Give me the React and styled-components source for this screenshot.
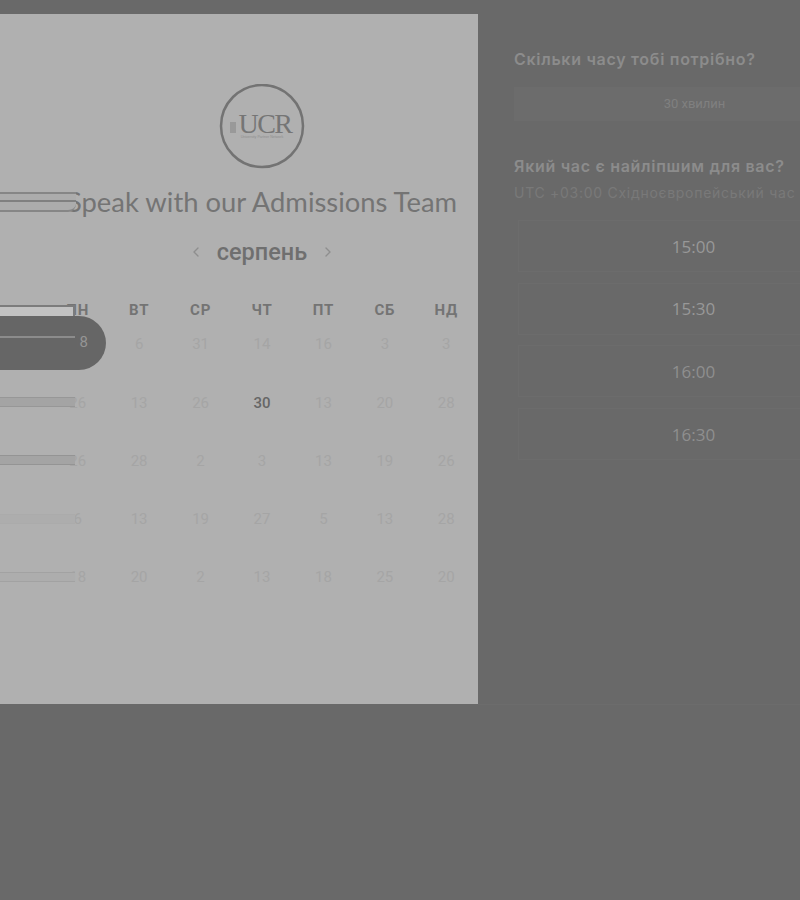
import React from 'react';
import styled, { createGlobalStyle } from 'styled-components';
import { FiChevronLeft, FiChevronRight } from 'react-icons/fi';

const GlobalStyle = createGlobalStyle`
  html, body {
    margin: 0;
    padding: 0;
    background: #696969;
    font-family: "Liberation Sans", Arial, sans-serif;
  }
`;

const Page = styled.div`
  width: 800px;
  height: 900px;
  overflow: hidden;
  padding-top: 14px;
  box-sizing: border-box;
  display: flex;
  align-items: flex-start;
`;

const LeftPanel = styled.section`
  position: relative;
  flex: 0 0 478px;
  height: 690px;
  box-sizing: border-box;
  padding: 70px 0 0 46px;
  background: #b0b0b0;
  overflow: hidden;
  display: flex;
  flex-direction: column;
  align-items: center;
`;

const Logo = styled.svg`
  width: 86px;
  height: 86px;
  display: block;
`;

const Heading = styled.h1`
  margin: 16px 0 0;
  font-family: Lato, "Open Sans", sans-serif;
  font-size: 27.4px;
  line-height: 32px;
  font-weight: 400;
  color: #747474;
  white-space: nowrap;
  width: 432px;
  text-align: center;
`;

const MonthRow = styled.div`
  display: flex;
  align-items: center;
  gap: 13px;
  margin-top: 21px;
  color: #8e8e8e;
  font-size: 16px;
`;

const MonthName = styled.span`
  font-family: Roboto, sans-serif;
  font-size: 23.5px;
  line-height: 26px;
  color: #6f6f6f;
  font-weight: 500;
`;

const Grid = styled.div`
  margin-top: 33px;
  width: 430px;
  display: grid;
  grid-template-columns: repeat(7, 1fr);
  grid-auto-rows: 58.3px;
  justify-items: center;
`;

const DayHead = styled.div`
  height: 30px;
  font-family: Roboto, sans-serif;
  font-size: 15px;
  line-height: 24px;
  font-weight: 700;
  letter-spacing: 0.8px;
  color: #747474;
`;

const Day = styled.div`
  font-family: Roboto, sans-serif;
  font-size: 15px;
  line-height: 24px;
  margin-top: -24px;
  color: ${({ $active }) => ($active ? '#666666' : '#a5a5a5')};
  font-weight: ${({ $active }) => ($active ? 500 : 400)};
`;

/* stray rendering remnants lying over the left edge of the panel */
const HeadingLines = styled.div`
  position: absolute;
  left: 0;
  top: 178px;
  width: 76px;
  height: 20px;
  box-sizing: border-box;
  background: #acacac;
  border: solid #868686;
  border-width: 2px 0;
  border-radius: 0 0 8px 0;
  &::after {
    content: '';
    display: block;
    margin-top: 6px;
    height: 2px;
    background: #808080;
  }
`;

const HeadBar = styled.div`
  position: absolute;
  left: 0;
  top: 291px;
  width: 75px;
  height: 11px;
  box-sizing: border-box;
  background: #c2c2c2;
  border: solid #7c7c7c;
  border-width: 2px 2px 0 0;
`;

const Pill = styled.div`
  position: absolute;
  left: 0;
  top: 302px;
  width: 106px;
  height: 54px;
  border-radius: 0 27px 27px 0;
  background: #666666;
  display: flex;
  align-items: center;
  &::before {
    content: '';
    position: relative;
    z-index: 1;
    flex: 0 0 77px;
    height: 54px;
    background: linear-gradient(#8c8c8c, #8c8c8c) 0 20px / 75px 2px no-repeat, #666666;
  }
`;

const PillDay = styled.span`
  font-family: Roboto, sans-serif;
  font-size: 15px;
  margin-left: -6px;
  margin-top: -3px;
  color: #959595;
`;

const RowBar = styled.div`
  position: absolute;
  left: 0;
  top: ${({ $top }) => $top}px;
  width: 75px;
  height: 10px;
  box-sizing: border-box;
  background: ${({ $fill }) => $fill};
  border: solid ${({ $edge }) => $edge};
  border-width: 1px 0;
`;

const RightPanel = styled.section`
  flex: 1;
  min-width: 0;
  height: 691px;
  box-sizing: border-box;
  border-bottom: 1px solid #6c6c6c;
  padding: 34px 0 0 36px;
`;

const Question = styled.h2`
  margin: 0;
  font-family: Inter, sans-serif;
  font-size: 16px;
  line-height: 22px;
  font-weight: 600;
  letter-spacing: 0.7px;
  color: #8c8c8c;
  white-space: nowrap;
`;

const Duration = styled.div`
  margin: 17px -75px 0 0;
  height: 34px;
  padding-bottom: 2px;
  display: flex;
  align-items: center;
  justify-content: center;
  box-sizing: border-box;
  background: #6c6c6c;
  font-family: Roboto, sans-serif;
  font-size: 13px;
  color: #808080;
`;

const SecondQuestion = styled(Question)`
  margin-top: 34px;
`;

const Zone = styled.div`
  margin-top: 6px;
  font-family: Inter, sans-serif;
  font-size: 14px;
  line-height: 20px;
  letter-spacing: 0.72px;
  color: #797979;
  white-space: nowrap;
`;

const Slots = styled.div`
  margin: 17px -69px 0 4px;
  display: flex;
  flex-direction: column;
  gap: 10.7px;
`;

const Slot = styled.div`
  height: 52px;
  display: flex;
  align-items: center;
  justify-content: center;
  box-sizing: border-box;
  border: 1px solid #6c6c6c;
  font-family: "Open Sans", sans-serif;
  font-size: 17px;
  color: ${({ $dim }) => ($dim ? '#8f8f8f' : '#989898')};
`;

const rows = [
  [null, 6, 31, 14, 16, 3, 3],
  [26, 13, 26, 30, 13, 20, 28],
  [26, 28, 2, 3, 13, 19, 26],
  [6, 13, 19, 27, 5, 13, 28],
  [18, 20, 2, 13, 18, 25, 20],
];

const heads = ['ПН', 'ВТ', 'СР', 'ЧТ', 'ПТ', 'СБ', 'НД'];

export default function App() {
  return (
    <Page>
      <GlobalStyle />
      <LeftPanel>
        <Logo viewBox="0 0 86 86">
          <circle cx="43" cy="42" r="41" fill="none" stroke="#737373" strokeWidth="2.5" />
          <rect x="11" y="38" width="6" height="11" fill="#999999" />
          <text x="46" y="49" textAnchor="middle" fontFamily="Liberation Serif" fontSize="28" fill="#757575" letterSpacing="-1.5">UCR</text>
          <text x="43" y="54" textAnchor="middle" fontFamily="Liberation Sans" fontSize="3.6" fill="#8e8e8e">University Partner Network</text>
        </Logo>
        <Heading>Speak with our Admissions Team</Heading>
        <MonthRow>
          <FiChevronLeft />
          <MonthName>серпень</MonthName>
          <FiChevronRight />
        </MonthRow>
        <Grid>
          {heads.map((h) => <DayHead key={h}>{h}</DayHead>)}
          {rows.flat().map((d, i) => (
            <Day key={i} $active={d === 30}>{d}</Day>
          ))}
        </Grid>
        <HeadingLines />
        <HeadBar />
        <Pill><PillDay>18</PillDay></Pill>
        <RowBar $top={383} $fill="#a4a4a4" $edge="#979797" />
        <RowBar $top={441} $fill="#a4a4a4" $edge="#949494" />
        <RowBar $top={500} $fill="#adadad" $edge="#ababab" />
        <RowBar $top={558} $fill="#adadad" $edge="#a2a2a2" />
      </LeftPanel>
      <RightPanel>
        <Question>Скільки часу тобі потрібно?</Question>
        <Duration>30 хвилин</Duration>
        <SecondQuestion>Який час є найліпшим для вас?</SecondQuestion>
        <Zone>UTC +03:00 Східноєвропейський час</Zone>
        <Slots>
          {['15:00', '15:30', '16:00', '16:30'].map((t, i) => <Slot key={t} $dim={i > 1}>{t}</Slot>)}
        </Slots>
      </RightPanel>
    </Page>
  );
}
